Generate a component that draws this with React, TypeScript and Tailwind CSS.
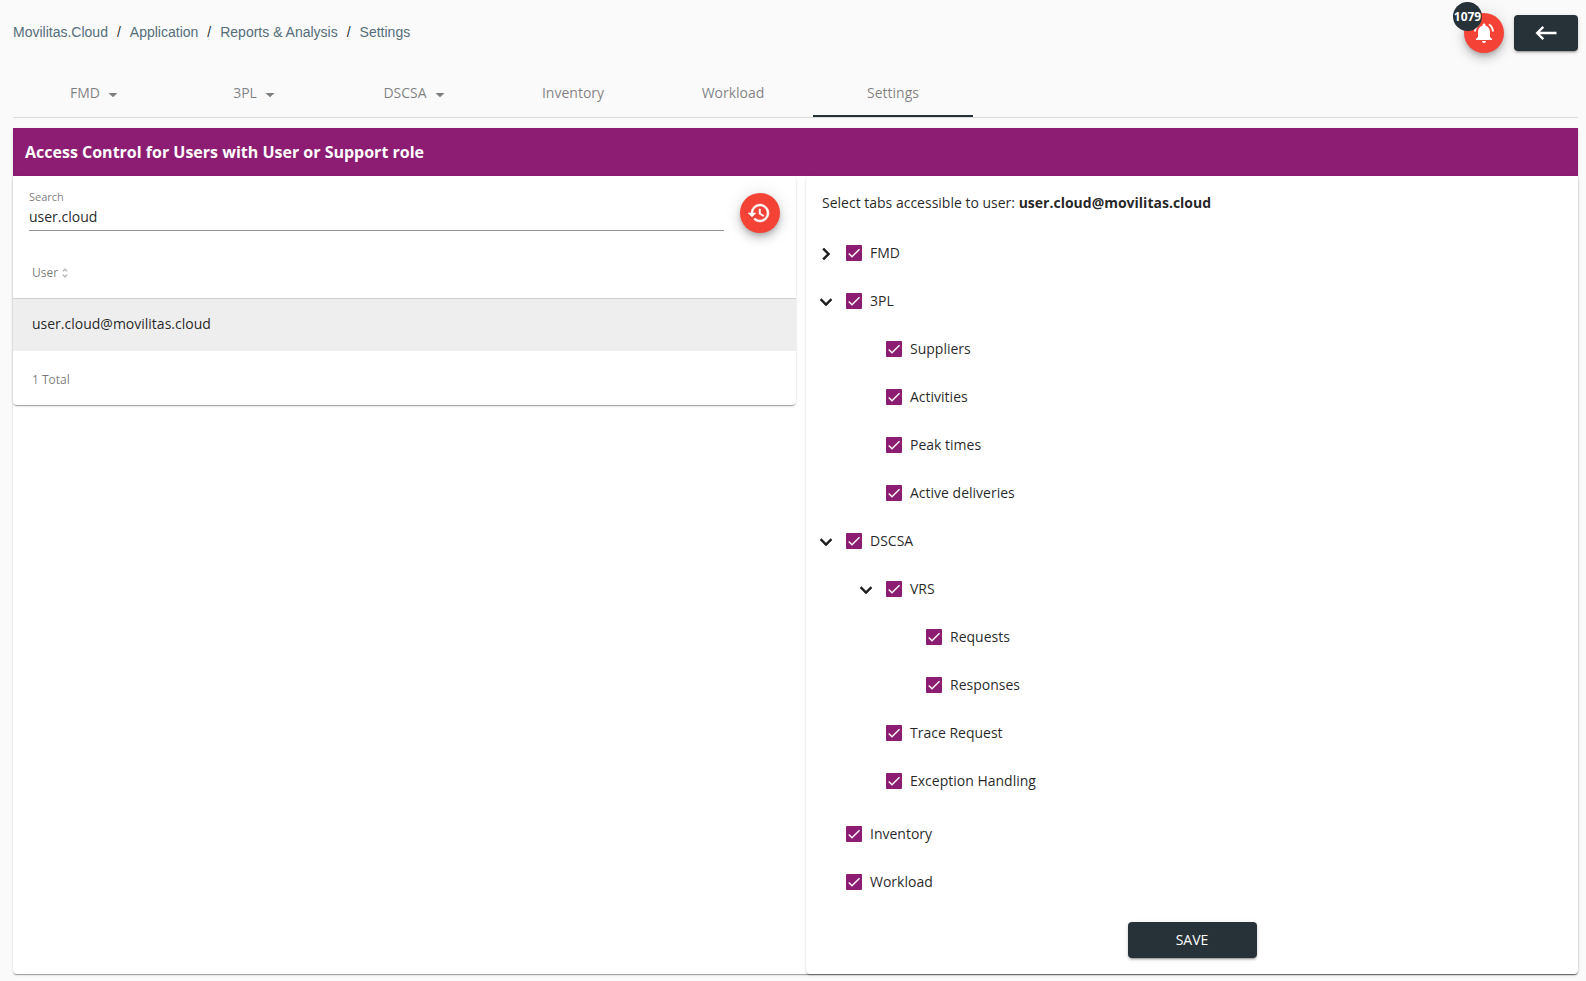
import { useState } from "react";
import {
  MdChevronRight,
  MdExpandMore,
  MdHistory,
  MdKeyboardBackspace,
  MdNotificationsActive,
} from "react-icons/md";

type TreeNode = { name: string; children?: TreeNode[] };

const breadcrumbs = [
  "Movilitas.Cloud",
  "Application",
  "Reports & Analysis",
  "Settings",
];

const tabs = [
  { name: "FMD", menu: true },
  { name: "3PL", menu: true },
  { name: "DSCSA", menu: true },
  { name: "Inventory" },
  { name: "Workload" },
  { name: "Settings", active: true },
];

const groups: TreeNode[] = [
  { name: "FMD", children: [{ name: "Reports" }, { name: "Alerts" }] },
  {
    name: "3PL",
    children: [
      { name: "Suppliers" },
      { name: "Activities" },
      { name: "Peak times" },
      { name: "Active deliveries" },
    ],
  },
  {
    name: "DSCSA",
    children: [
      { name: "VRS", children: [{ name: "Requests" }, { name: "Responses" }] },
      { name: "Trace Request" },
      { name: "Exception Handling" },
    ],
  },
];

const pages: TreeNode[] = [{ name: "Inventory" }, { name: "Workload" }];

const cardShadow =
  "shadow-[0_2px_1px_-1px_rgba(0,0,0,0.2),0_1px_1px_0_rgba(0,0,0,0.14),0_1px_3px_0_rgba(0,0,0,0.12)]";
const buttonShadow =
  "shadow-[0_3px_1px_-2px_rgba(0,0,0,0.2),0_2px_2px_0_rgba(0,0,0,0.14),0_1px_5px_0_rgba(0,0,0,0.12)]";
const fabShadow =
  "shadow-[0_3px_5px_-1px_rgba(0,0,0,0.2),0_6px_10px_0_rgba(0,0,0,0.14),0_1px_18px_0_rgba(0,0,0,0.12)]";
// the first path of these icons is an empty frame, so only the last one is thickened
const boldIcon = "[&>path:last-child]:stroke-[0.5]";

const TreeItem = ({ node }: { node: TreeNode }) => {
  const [open, setOpen] = useState(node.name !== "FMD");

  return (
    <li>
      <div className="flex h-12 items-center">
        {node.children ? (
          <button
            type="button"
            aria-label={`Toggle ${node.name}`}
            aria-expanded={open}
            onClick={() => setOpen(!open)}
            className="flex size-10 items-center justify-center pt-0.5 text-2xl"
          >
            {open ? (
              <MdExpandMore className={boldIcon} />
            ) : (
              <MdChevronRight className={boldIcon} />
            )}
          </button>
        ) : (
          <span className="w-10" />
        )}
        <label className="flex items-center gap-2">
          <span className="grid size-4">
            <input
              type="checkbox"
              defaultChecked
              className="peer col-start-1 row-start-1 size-4 appearance-none rounded-[1px] border-2 border-black/50 checked:border-[#8c1d73] checked:bg-[#8c1d73]"
            />
            <svg
              viewBox="0 0 24 24"
              className="pointer-events-none invisible col-start-1 row-start-1 size-4 fill-none stroke-[#fafafa] stroke-[2.2] peer-checked:visible"
            >
              <path d="M4.1 12.7 9 17.6 20.3 6.3" />
            </svg>
          </span>
          {node.name}
        </label>
      </div>
      {node.children && open && (
        <ul className="pl-10">
          {node.children.map((child) => (
            <TreeItem key={child.name} node={child} />
          ))}
        </ul>
      )}
    </li>
  );
};

const App = () => {
  const [search, setSearch] = useState("user.cloud");

  return (
    <div className="min-h-screen bg-[#fafafa] pr-2 pb-[7px] pl-[13px] font-['Open_Sans',sans-serif] text-sm text-black/87">
      <header className="flex h-[69px] items-start justify-between">
        <nav
          aria-label="Breadcrumb"
          className="flex gap-[9px] pt-[22px] font-['Liberation_Sans',Arial,sans-serif]"
        >
          {breadcrumbs.map((crumb, i) => (
            <span key={crumb} className="flex gap-[9px]">
              {i > 0 && <span>/</span>}
              <a href="#" className="text-[#546e7a]">
                {crumb}
              </a>
            </span>
          ))}
        </nav>
        <div className="flex items-center gap-2.5 pt-[13px]">
          <button
            type="button"
            aria-label="Notifications"
            className={`relative flex size-10 items-center justify-center rounded-full bg-[#f44336] text-2xl text-white ${fabShadow}`}
          >
            <MdNotificationsActive />
            <span className="absolute -top-[11px] -left-[11px] flex size-[29px] items-center justify-center rounded-full bg-[#263238] text-xs font-bold">
              1079
            </span>
          </button>
          <button
            type="button"
            aria-label="Back"
            className={`flex h-9 w-16 items-center justify-center rounded bg-[#263238] text-[28px] text-white ${buttonShadow}`}
          >
            <MdKeyboardBackspace />
          </button>
        </div>
      </header>

      <nav aria-label="Reports" className="flex border-b border-black/12">
        {tabs.map((tab) => (
          <button
            key={tab.name}
            type="button"
            className={`flex h-12 w-40 items-center justify-center gap-2 border-b-2 pt-0.5 ${
              tab.active ? "border-[#263238]" : "border-transparent"
            } ${tab.menu ? "pl-0.5" : ""} text-black/50`}
          >
            {tab.name}
            {tab.menu && (
              <svg viewBox="0 0 10 5" className="mt-1 h-[5px] w-2.5 fill-current">
                <path d="M0.5 0h9L5 4.3z" />
              </svg>
            )}
          </button>
        ))}
      </nav>

      <main className={`mt-2.5 rounded-b bg-white ${cardShadow}`}>
        <h1 className="flex h-12 items-center bg-[#8c1d73] px-3 text-base font-bold text-white">
          Access Control for Users with User or Support role
        </h1>
        <div className="flex gap-2.5">
          <section
            className={`flex-[783] self-start rounded bg-white ${cardShadow}`}
          >
            <div className="flex items-start gap-4 px-4 pt-4">
              <div className="flex h-[39px] flex-1 flex-col border-b border-black/42">
                <label
                  htmlFor="search"
                  className="text-[11px] leading-[10px] text-black/54"
                >
                  Search
                </label>
                <input
                  id="search"
                  value={search}
                  onChange={(e) => setSearch(e.target.value)}
                  className="mt-[5px] h-5 outline-none"
                />
              </div>
              <button
                type="button"
                aria-label="Reset search"
                className={`mt-px flex size-10 items-center justify-center rounded-full bg-[#f44336] pr-0.5 text-2xl text-white ${fabShadow}`}
              >
                <MdHistory className={boldIcon} />
              </button>
            </div>
            <table className="mt-[15px] w-full text-left">
              <thead className="border-b border-black/12 text-xs text-black/54">
                <tr>
                  <th className="h-[50px] px-[19px] font-normal">
                    <button type="button" className="flex items-center gap-1">
                      User
                      <svg
                        viewBox="0 0 6 10"
                        className="h-2.5 w-1.5 fill-none stroke-black/30 stroke-[1.3]"
                      >
                        <path d="M0.8 3.4 3 1.2l2.2 2.2M0.8 6.6 3 8.8l2.2-2.2" />
                      </svg>
                    </button>
                  </th>
                </tr>
              </thead>
              <tbody>
                <tr className="bg-[#eee]">
                  <td className="h-[53px] px-[19px] pb-0.5">
                    user.cloud@movilitas.cloud
                  </td>
                </tr>
              </tbody>
            </table>
            <p className="flex h-[54px] items-center px-[19px] pt-1 text-xs text-black/54">
              1 Total
            </p>
          </section>

          <section className={`flex-[772] rounded bg-white pb-4 ${cardShadow}`}>
            <p className="px-4 pt-[17px] pb-4">
              Select tabs accessible to user:{" "}
              <b className="font-bold">user.cloud@movilitas.cloud</b>
            </p>
            <ul>
              {groups.map((node) => (
                <TreeItem key={node.name} node={node} />
              ))}
            </ul>
            <ul className="mt-[5px]">
              {pages.map((node) => (
                <TreeItem key={node.name} node={node} />
              ))}
            </ul>
            <div className="mt-4 flex justify-center">
              <button
                type="button"
                className={`h-9 w-[129px] rounded bg-[#263238] font-medium text-white ${buttonShadow}`}
              >
                SAVE
              </button>
            </div>
          </section>
        </div>
      </main>
    </div>
  );
};

export default App;
